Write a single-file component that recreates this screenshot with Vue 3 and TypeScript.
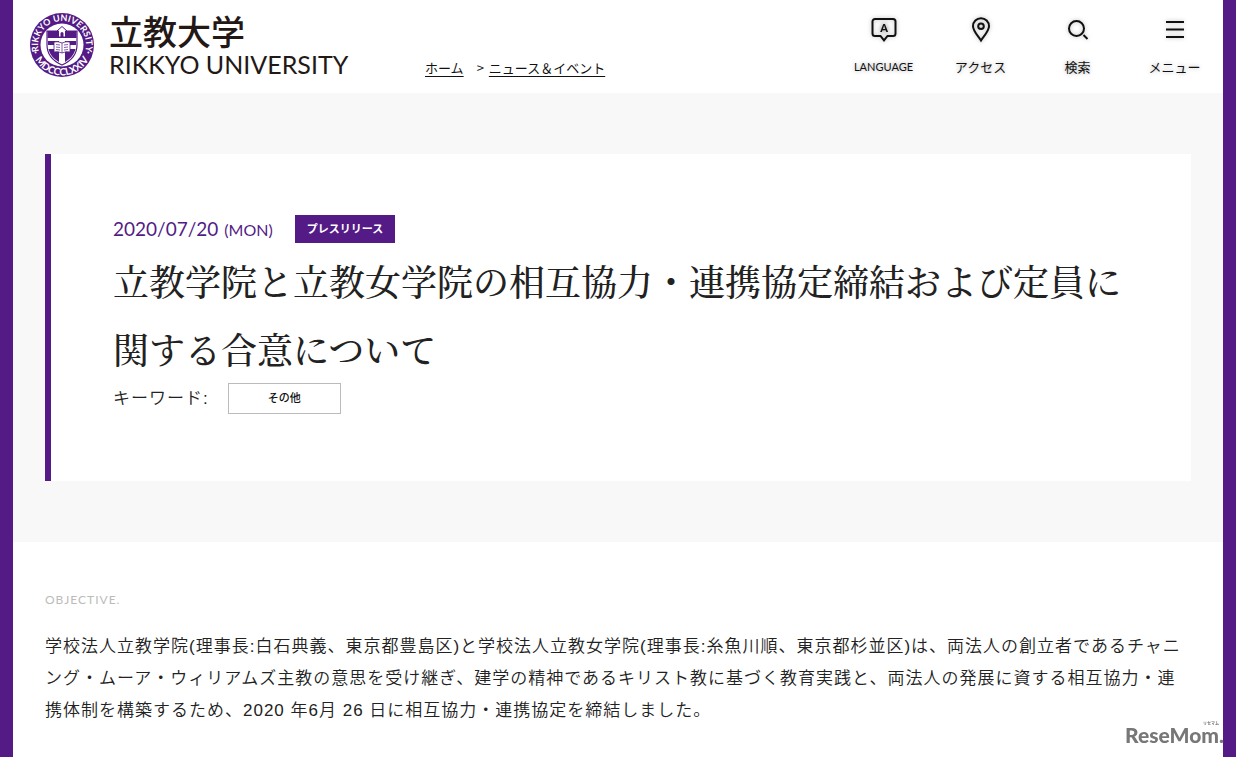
<script setup lang="ts">
interface Crumb {
  label: string
  href: string
}

interface NavItem {
  id: 'language' | 'access' | 'search' | 'menu'
  label: string
}

const crumbs: Crumb[] = [
  { label: 'ホーム', href: '#home' },
  { label: 'ニュース＆イベント', href: '#news' },
]

const navItems: NavItem[] = [
  { id: 'language', label: 'LANGUAGE' },
  { id: 'access', label: 'アクセス' },
  { id: 'search', label: '検索' },
  { id: 'menu', label: 'メニュー' },
]
</script>

<template>
  <div class="page">
    <header class="header">
      <a class="brand" href="#home" aria-label="立教大学 RIKKYO UNIVERSITY">
        <svg class="seal" viewBox="0 0 64 64" aria-hidden="true">
          <defs>
            <path id="seal-arc" d="M11.200 44A24 24 0 1 1 52.800 44" />
            <path id="seal-bottom" d="M1.600 32A30.400 30.400 0 0 0 62.400 32" />
          </defs>
          <circle cx="32" cy="32" r="32" fill="#541b86" />
          <circle cx="32" cy="32" r="21.5" fill="#fff" />
          <text class="seal-text"><textPath href="#seal-arc" startOffset="50%" text-anchor="middle">RIKKYO UNIVERSITY</textPath></text>
          <text class="seal-text seal-year"><textPath href="#seal-bottom" startOffset="50%" text-anchor="middle">MDCCCLXXIV</textPath></text>
          <circle cx="5.6" cy="39.5" r="1" fill="#fff" />
          <circle cx="58.4" cy="39.5" r="1" fill="#fff" />
          <path d="M17 18h30v14c0 9-6 16-15 20c-9-4-15-11-15-20z" fill="#fff" stroke="#541b86" stroke-width="1.2" />
          <path d="M17.500 18h29v7h-29zM18 28h11v4H18zM35 28h11v4H35zM18.500 36h10.500v13c-5-3-9-7-10.500-13zM35 36h10.500c-1.500 6-5.500 10-10.500 13z" fill="#541b86" />
          <path d="M32 13.500l5 4.500h-1.500v6h-7v-6H27z" fill="#fff" stroke="#541b86" stroke-width="1" />
          <path d="M30.500 24v-3.500a1.500 1.500 0 0 1 3 0V24z" fill="#541b86" />
          <path d="M24 29q4-1 8 1q4-2 8-1v10q-4-1-8 1q-4-2-8-1z" fill="#fff" stroke="#541b86" stroke-width="0.8" />
          <path d="M32 30v10M26 31.500l4 .5M26 34l4 .5M26 36.500l4 .5M34 32l4-.5M34 34.500l4-.5M34 37l4-.5" fill="none" stroke="#541b86" stroke-width="0.700" />
        </svg>
        <span class="brand-names">
          <span class="brand-ja">立教大学</span>
          <span class="brand-en">RIKKYO UNIVERSITY</span>
        </span>
      </a>

      <nav class="crumbs" aria-label="breadcrumb">
        <template v-for="(crumb, i) in crumbs" :key="crumb.href">
          <span v-if="i > 0" class="crumb-sep">&gt;</span>
          <a :href="crumb.href">{{ crumb.label }}</a>
        </template>
      </nav>

      <div class="tools">
        <button v-for="item in navItems" :key="item.id" type="button" class="tool" :class="{ latin: item.id === 'language' }">
          <svg class="tool-icon" viewBox="0 0 28 28" aria-hidden="true">
            <template v-if="item.id === 'language'">
              <path d="M5 3h18a2.500 2.500 0 0 1 2.500 2.500v12a2.500 2.500 0 0 1-2.500 2.500h-5.500L14 24.400l-3.500-4.400H5A2.500 2.500 0 0 1 2.500 17.500v-12A2.500 2.500 0 0 1 5 3z" />
              <text x="14" y="15.800" text-anchor="middle" class="icon-letter">A</text>
            </template>
            <template v-else-if="item.id === 'access'">
              <path d="M14 24.500c-2.500-4-8-9.500-8-14.300a8 8 0 0 1 16 0c0 4.800-5.500 10.300-8 14.300z" />
              <circle cx="14" cy="10.300" r="2.800" />
            </template>
            <template v-else-if="item.id === 'search'">
              <circle cx="12.500" cy="12.500" r="7.500" />
              <path d="M19.500 19l4 4" />
            </template>
            <path v-else d="M5 6h18M5 13.500h18M5 21h18" />
          </svg>
          <span>{{ item.label }}</span>
        </button>
      </div>
    </header>

    <main>
      <section class="hero">
        <article class="card">
          <div class="meta">
            <time datetime="2020-07-20">2020/07/20 <small>(MON)</small></time>
            <span class="badge">プレスリリース</span>
          </div>
          <h1>立教学院と立教女学院の相互協力・連携協定締結および定員に関する合意について</h1>
          <div class="keywords">
            <span>キーワード:</span>
            <a href="#other">その他</a>
          </div>
        </article>
      </section>

      <section class="objective">
        <h2>OBJECTIVE.</h2>
        <p>学校法人立教学院(理事長:白石典義、東京都豊島区)と学校法人立教女学院(理事長:糸魚川順、東京都杉並区)は、両法人の創立者であるチャニング・ムーア・ウィリアムズ主教の意思を受け継ぎ、建学の精神であるキリスト教に基づく教育実践と、両法人の発展に資する相互協力・連携体制を構築するため、2020 年6月 26 日に相互協力・連携協定を締結しました。</p>
      </section>
    </main>

    <div class="watermark">
      <span class="watermark-ruby">リセマム</span>
      <span class="watermark-name">ReseMom.</span>
    </div>
  </div>
</template>

<style>
body {
  margin: 0;
  background: #fff;
}
</style>

<style scoped>
.page {
  box-sizing: border-box;
  min-height: 100vh;
  border: solid #541b86;
  border-width: 0 13px;
  background: #fff;
  color: #222;
  font-family: Lato, "Noto Sans CJK JP", sans-serif;
}

.header {
  display: flex;
  height: 93px;
}

.brand {
  display: flex;
  gap: 15px;
  padding: 13px 0 0 17px;
  color: #231815;
  text-decoration: none;
}

.seal {
  width: 64px;
  height: 64px;
}

.seal-text {
  fill: #fff;
  font: 700 9px Lato, sans-serif;
}

.seal-year {
  font-size: 10px;
}

.brand-names {
  display: flex;
  flex-direction: column;
  width: 244px;
  white-space: nowrap;
}

.brand-ja {
  font-family: "Noto Sans CJK JP", sans-serif;
  font-size: 34px;
  font-weight: 500;
  line-height: 36px;
}

.brand-en {
  font-size: 25px;
  line-height: 30px;
}

.crumbs {
  display: flex;
  gap: 5px;
  padding: 58px 0 0 72px;
  font-family: "Noto Sans CJK JP", sans-serif;
  font-size: 13px;
  line-height: 20px;
  white-space: nowrap;
}

.crumbs a {
  color: #111;
  text-underline-offset: 3px;
}

.crumb-sep {
  margin-left: 8px;
}

.tools {
  display: flex;
  margin-left: auto;
}

.tool {
  display: flex;
  flex-direction: column;
  align-items: center;
  gap: 13px;
  width: 97px;
  padding: 16px 0 0;
  border: 0;
  background: none;
  color: #111;
  font-family: Lato, "Noto Sans CJK JP", sans-serif;
  font-size: 13px;
  line-height: 20px;
  text-shadow: 0 0 4px #aaa;
  white-space: nowrap;
}

.tool.latin {
  font-size: 11px;
}

.tool-icon {
  width: 28px;
  height: 28px;
  fill: none;
  stroke: #111;
  stroke-width: 2;
  filter: drop-shadow(0 0 2px #bbb);
}

.icon-letter {
  fill: #111;
  stroke: none;
  font: 900 11px Lato, sans-serif;
}

.hero {
  padding: 61px 32px;
  background: #f8f8f8;
}

.card {
  padding: 61px 62px 67px;
  border-left: 6px solid #541b86;
  background: #fff;
}

.meta {
  display: flex;
  align-items: center;
  gap: 22px;
  height: 28px;
}

time {
  display: flex;
  align-items: baseline;
  gap: 6px;
  color: #541b86;
  font-size: 19px;
  line-height: 26px;
}

time small {
  font-size: 16px;
}

.badge {
  padding: 0 12px;
  background: #541b86;
  color: #fff;
  font-size: 11px;
  font-weight: 700;
  line-height: 28px;
}

h1 {
  margin: 4px 0 0;
  font-family: "Noto Serif CJK JP", "Noto Serif JP", "Noto Sans CJK JP", serif;
  font-size: 36px;
  font-weight: 500;
  line-height: 68px;
}

.keywords {
  display: flex;
  align-items: center;
  gap: 19px;
  font-family: "Liberation Sans", "Noto Sans CJK JP", sans-serif;
  font-size: 17px;
  font-weight: 350;
  letter-spacing: 1px;
  line-height: 29px;
}

.keywords a {
  width: 111px;
  border: 1px solid #bbb;
  color: #111;
  font-size: 11px;
  font-weight: 500;
  letter-spacing: normal;
  text-align: center;
  text-decoration: none;
}

.objective {
  padding: 48px 32px 28px;
}

h2 {
  margin: 0 0 21px;
  color: #bbb;
  font-size: 12px;
  font-weight: 400;
  letter-spacing: 1px;
  line-height: 20px;
}

p {
  margin: 0;
  font-family: "Liberation Sans", "Noto Sans CJK JP", sans-serif;
  font-size: 17px;
  font-weight: 350;
  letter-spacing: 1px;
  line-height: 32px;
}

.watermark {
  position: fixed;
  right: 12px;
  bottom: 13px;
  display: flex;
  flex-direction: column;
  align-items: flex-end;
  color: #777;
}

.watermark-ruby {
  margin-right: 5px;
  font-size: 4px;
  font-weight: 700;
  line-height: 4px;
}

.watermark-name {
  font-family: Lato, sans-serif;
  font-size: 21px;
  font-weight: 900;
  line-height: 18px;
}
</style>
